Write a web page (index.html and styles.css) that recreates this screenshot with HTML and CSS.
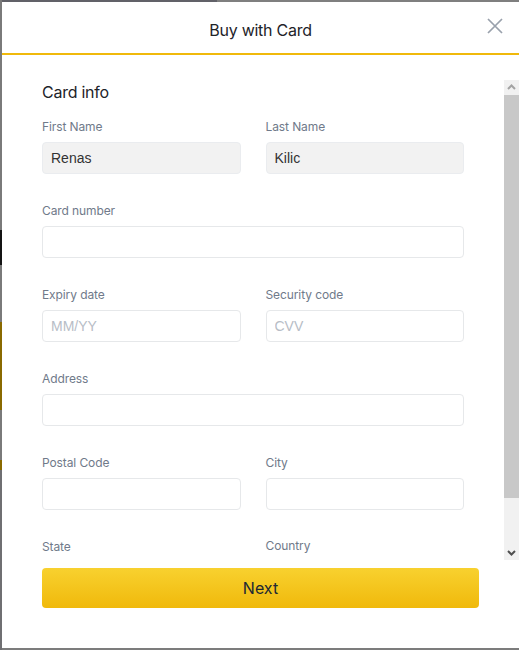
FILE: index.html
```html
<!DOCTYPE html>
<html lang="en">
<head>
<meta charset="utf-8">
<title>Buy with Card</title>
<link rel="stylesheet" href="styles.css">
</head>
<body>
<div class="page">
  <div class="modal">
    <header class="modal-header">
      <span></span>
      <h1 class="modal-title">Buy with Card</h1>
      <button class="close" type="button" aria-label="Close">
        <svg viewBox="0 0 16 16" width="16" height="16"><path d="M1 1 L15 15 M15 1 L1 15" stroke="#99a1ac" stroke-width="1.7" fill="none"/></svg>
      </button>
    </header>
    <div class="spacer"></div>
    <div class="scroll-wrap">
      <div class="scroll">
        <h2 class="section-title">Card info</h2>
        <div class="grid">
          <div class="field">
            <label class="label">First Name</label>
            <input class="input" type="text" value="Renas" disabled>
          </div>
          <div class="field">
            <label class="label">Last Name</label>
            <input class="input" type="text" value="Kilic" disabled>
          </div>
          <div class="field wide">
            <label class="label">Card number</label>
            <input class="input" type="text">
          </div>
          <div class="field">
            <label class="label">Expiry date</label>
            <input class="input" type="text" placeholder="MM/YY">
          </div>
          <div class="field">
            <label class="label">Security code</label>
            <input class="input" type="text" placeholder="CVV">
          </div>
          <div class="field wide">
            <label class="label">Address</label>
            <input class="input" type="text">
          </div>
          <div class="field">
            <label class="label">Postal Code</label>
            <input class="input" type="text">
          </div>
          <div class="field">
            <label class="label">City</label>
            <input class="input" type="text">
          </div>
          <div class="field">
            <label class="label">State</label>
            <input class="input" type="text">
          </div>
          <div class="field">
            <label class="label label-up">Country</label>
            <input class="input" type="text">
          </div>
        </div>
      </div>
      <div class="scrollbar" aria-hidden="true">
        <div class="sb-btn">
          <svg viewBox="0 0 15 15" width="15" height="15"><path d="M4 9 L7.5 5.5 L11 9" stroke="#a3a3a3" stroke-width="2" fill="none"/></svg>
        </div>
        <div class="sb-track">
          <div class="sb-thumb"></div>
        </div>
        <div class="sb-btn">
          <svg viewBox="0 0 15 15" width="15" height="15"><path d="M4 6 L7.5 9.5 L11 6" stroke="#505050" stroke-width="2" fill="none"/></svg>
        </div>
      </div>
    </div>
    <footer class="modal-footer">
      <button class="next" type="button">Next</button>
    </footer>
  </div>
</div>
</body>
</html>
```

FILE: styles.css
```css
* { box-sizing: border-box; }

html, body {
  margin: 0;
  padding: 0;
}

body {
  width: 519px;
  height: 650px;
  overflow: hidden;
  font-family: Inter, "Noto Sans", "Liberation Sans", sans-serif;
}

.page {
  width: 519px;
  height: 650px;
  padding: 2px 0 2px 2px;
  background:
    linear-gradient(to bottom,
      #7a7a7a 0, #7a7a7a 230px,
      #141414 230px, #141414 265px,
      #7a7a7a 265px, #7a7a7a 322px,
      #8a6a00 322px, #8a6a00 410px,
      #7a7a7a 410px, #7a7a7a 460px,
      #8a6a00 460px, #8a6a00 470px,
      #6f6f72 470px, #6f6f72 650px) left top / 2px 650px no-repeat,
    linear-gradient(to right, #616168 0, #616168 217px, #7f7f7f 217px) left top / 519px 2px no-repeat,
    #7c7c7c;
}

.modal {
  width: 517px;
  height: 646px;
  background: #ffffff;
  display: flex;
  flex-direction: column;
}

.modal-header {
  height: 53px;
  flex: none;
  border-bottom: 2px solid #f0b90b;
  display: grid;
  grid-template-columns: 1fr auto 1fr;
  align-items: center;
  padding: 0 16px;
}

.modal-title {
  margin: 4px 0 0 0;
  font-size: 16px;
  font-weight: 400;
  color: #1e2329;
  line-height: 20px;
  letter-spacing: -0.25px;
}

.close {
  justify-self: end;
  width: 16px;
  height: 16px;
  padding: 0;
  margin: 0 0 3px 0;
  border: 0;
  background: transparent;
  display: flex;
}

.spacer {
  height: 25px;
  flex: none;
}

.scroll-wrap {
  height: 480px;
  flex: none;
  display: flex;
}

.scroll {
  flex: 1;
  min-width: 0;
  overflow: hidden;
  padding: 0 40px 22px 40px;
}

.scrollbar {
  width: 15px;
  flex: none;
  display: flex;
  flex-direction: column;
  background: #f1f1f1;
}

.sb-btn {
  height: 15px;
  flex: none;
  display: flex;
}

.sb-track {
  flex: 1;
  display: flex;
  flex-direction: column;
}

.sb-thumb {
  height: 403px;
  background: #c8c8c8;
}

.section-title {
  margin: 0 0 15px 0;
  font-size: 16px;
  font-weight: 400;
  line-height: 24px;
  color: #1e2329;
  letter-spacing: -0.25px;
}

.grid {
  display: grid;
  grid-template-columns: 1fr 1fr;
  column-gap: 25px;
  row-gap: 29px;
}

.field {
  display: flex;
  flex-direction: column;
  gap: 7px;
}

.wide {
  grid-column: 1 / -1;
}

.label {
  font-size: 12px;
  line-height: 16px;
  height: 16px;
  color: #707a8a;
  letter-spacing: -0.1px;
}

.label-up {
  position: relative;
  top: -1px;
}

.input {
  width: 100%;
  height: 32px;
  margin: 0;
  border: 1px solid #e6e8ea;
  border-radius: 4px;
  background: #ffffff;
  padding: 0 8px;
  font-family: "Liberation Sans", Arial, sans-serif;
  font-size: 14px;
  color: #333333;
  outline: none;
}

.input:disabled {
  background: #f2f2f2;
  border-color: #eaecef;
  color: #333333;
  -webkit-text-fill-color: #333333;
  opacity: 1;
}

.input::placeholder {
  color: #b7bdc6;
}

.modal-footer {
  flex: none;
  padding: 8px 38px 40px 40px;
}

.next {
  display: block;
  width: 437px;
  height: 40px;
  margin: 0;
  border: 0;
  border-radius: 4px;
  background: linear-gradient(to bottom, #f8d12f, #f0b90b);
  font-family: Inter, "Noto Sans", "Liberation Sans", sans-serif;
  font-size: 16px;
  color: #212833;
  cursor: pointer;
}
```
